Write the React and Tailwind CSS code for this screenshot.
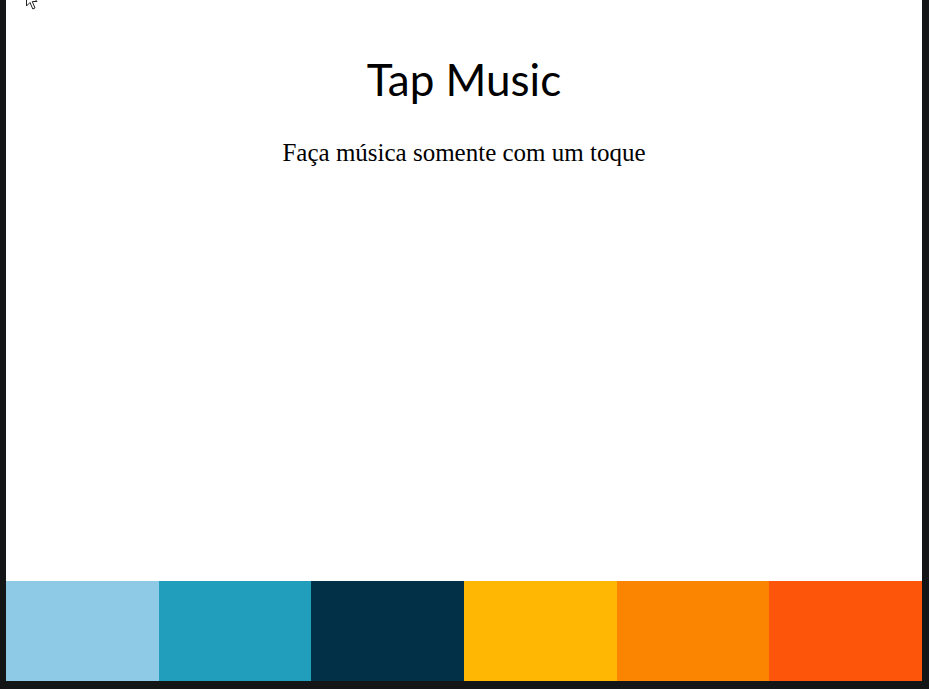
import React from "react";

const keys = [
  "bg-[#8ecae6]",
  "bg-[#219ebc]",
  "bg-[#023047]",
  "bg-[#ffb703]",
  "bg-[#fb8500]",
  "bg-[#fd5509]",
];

export default function App() {
  return (
    <div className="relative h-[689px] w-full overflow-hidden bg-[#131516] pl-[6px] pr-[7px] pb-[8px]">
      {/* window content */}
      <div className="flex h-full flex-col bg-white">
        <header className="flex flex-1 flex-col items-center pt-[53px] text-center">
          <h1
            className="text-[44px] leading-[1.2] text-black"
            style={{ fontFamily: "Lato, 'Open Sans', sans-serif" }}
          >
            Tap Music
          </h1>
          <p
            className="mt-[33px] text-[25px] leading-[1.15] text-black"
            style={{ fontFamily: "'Liberation Serif', serif" }}
          >
            Faça música somente com um toque
          </p>
        </header>

        {/* pads */}
        <div className="grid h-[100px] grid-cols-6">
          {keys.map((k) => (
            <div key={k} className={k} />
          ))}
        </div>
      </div>

      {/* mouse pointer */}
      <svg
        className="absolute left-[26px] top-[-10px]"
        width="13"
        height="20"
        viewBox="0 0 13 20"
      >
        <path
          d="M0.5 0.5 L0.5 16 L4 12.5 L6.8 19 L9 18 L6.3 11.5 L11 11.5 Z"
          fill="white"
          stroke="#222"
          strokeWidth="1"
        />
      </svg>
    </div>
  );
}
